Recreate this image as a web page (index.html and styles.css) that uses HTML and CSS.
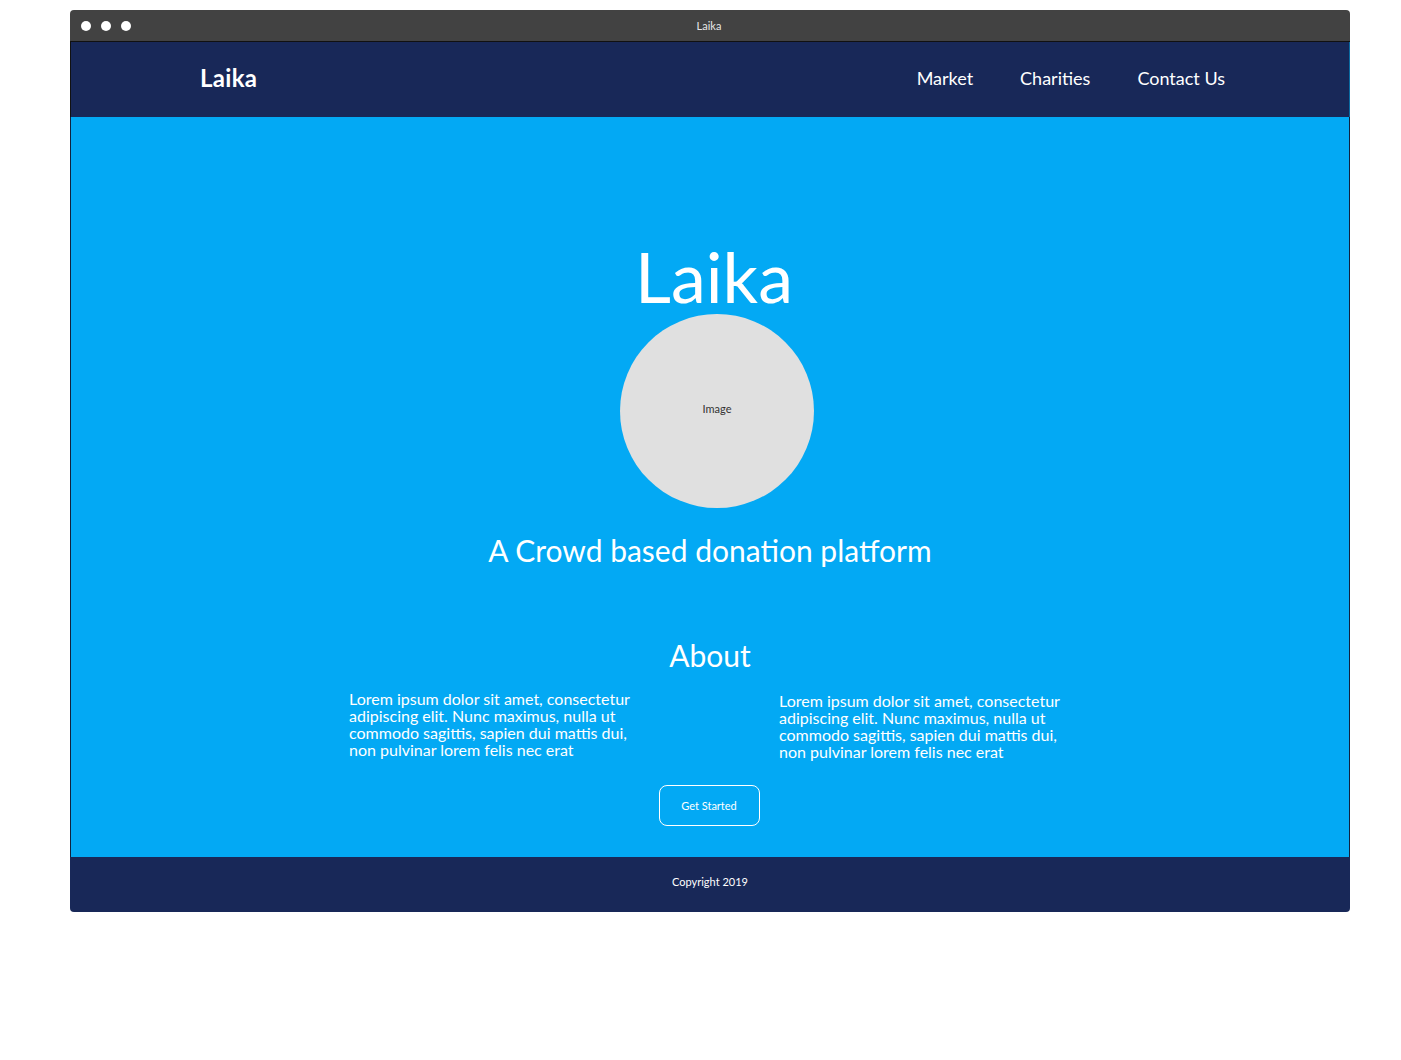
FILE: index.html
```html
<!DOCTYPE html>
<html>
<head>
<meta charset="utf-8">
<link rel="stylesheet" href="styles.css">
</head>
<body>
<div class="window">
  <div class="titlebar">
    <div class="dots"><span class="dot"></span><span class="dot"></span><span class="dot"></span></div>
    <div class="wtitle">Laika</div>
  </div>
  <header class="nav">
    <div class="brand">Laika</div>
    <nav class="links">
      <a>Market</a>
      <a>Charities</a>
      <a>Contact Us</a>
    </nav>
  </header>
  <main class="hero">
    <h1 class="title">Laika</h1>
    <div class="image">Image</div>
    <p class="tagline">A Crowd based donation platform</p>
    <h2 class="about">About</h2>
    <div class="cols">
      <p class="col col-left">Lorem ipsum dolor sit amet, consectetur adipiscing elit. Nunc maximus, nulla ut commodo sagittis, sapien dui mattis dui, non pulvinar lorem felis nec erat</p>
      <p class="col col-right">Lorem ipsum dolor sit amet, consectetur adipiscing elit. Nunc maximus, nulla ut commodo sagittis, sapien dui mattis dui, non pulvinar lorem felis nec erat</p>
    </div>
    <button class="btn">Get Started</button>
  </main>
  <footer class="footer">Copyright 2019</footer>
</div>
</body>
</html>
```
FILE: styles.css
```css
* { box-sizing: border-box; }
html, body { margin: 0; padding: 0; background: #fff; }
body { font-family: Lato, "Open Sans", sans-serif; }

.window {
  margin: 10px 0 0 70px;
  width: 1280px;
  border-radius: 4px;
  overflow: hidden;
}
.titlebar {
  height: 32px;
  background: #424242;
  border-bottom: 1px solid #111;
  display: flex;
  align-items: center;
  position: relative;
}
.dots { display: flex; gap: 10px; padding-left: 11px; }
.dot { width: 10px; height: 10px; border-radius: 50%; background: #fff; display: block; }
.wtitle {
  position: absolute; left: 0; right: 0; top: 0; bottom: 0;
  display: flex; align-items: center; justify-content: center;
  color: #e6e6e6; font-size: 11px; padding-right: 2px;
}
.nav {
  height: 75px;
  background: #182858;
  border-left: 1px solid #111;
  border-right: 1px solid #0a6aa0;
  display: flex;
  align-items: center;
  justify-content: space-between;
  padding: 0 124px 4px 129px;
}
.brand { color: #fff; font-weight: 700; font-size: 24px; letter-spacing: 0.3px; }
.links { display: flex; gap: 47px; }
.links a { color: #fff; font-size: 18px; }
.hero {
  background: #03a9f4;
  border-left: 1px solid #10233f;
  border-right: 1px solid #10233f;
  height: 740px;
  display: flex;
  flex-direction: column;
  align-items: center;
  padding-top: 121px;
  color: #fff;
}
.title {
  margin: 0; font-weight: 400; font-size: 70px; line-height: 76px;
  padding-left: 8px;
}
.image {
  width: 194px; height: 194px; border-radius: 50%;
  background: #e0e0e0; color: #333; font-size: 11px;
  display: flex; align-items: center; justify-content: center;
  margin-left: 14px; padding-bottom: 6px;
}
.tagline { margin: 24px 0 0; font-size: 30px; line-height: 36px; }
.about { margin: 69px 0 0; font-weight: 400; font-size: 30px; line-height: 36px; }
.cols {
  display: flex; gap: 144px; margin-top: 17px; padding-right: 6px;
}
.col { margin: 0; width: 286px; font-size: 16px; line-height: 17px; }
.col-right { margin-top: 2px; }
.btn {
  margin-top: 25px;
  width: 101px; height: 41px;
  background: transparent;
  border: 1px solid #fff; border-radius: 8px;
  color: #fff; font-family: inherit; font-size: 11px;
  margin-right: 2px;
}
.footer {
  height: 55px; background: #182858; color: #fff;
  font-size: 11px; padding-bottom: 7px;
  display: flex; align-items: center; justify-content: center;
}
```
